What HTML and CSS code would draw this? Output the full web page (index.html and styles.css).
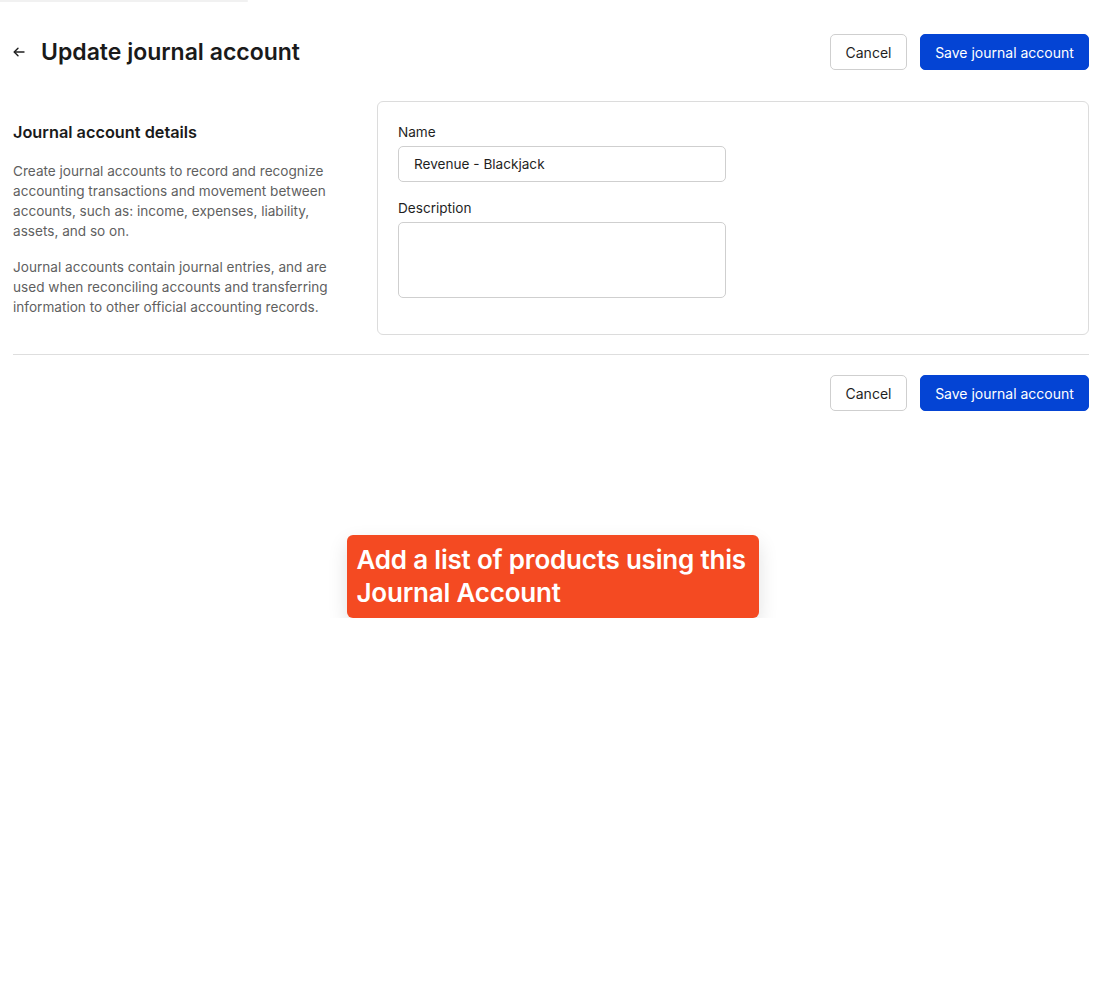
FILE: index.html
```html
<!DOCTYPE html>
<html lang="en">
<head>
    <meta charset="UTF-8">
    <meta name="viewport" content="width=device-width, initial-scale=1.0">
    <title>Update journal account</title>
    <link rel="stylesheet" href="styles.css">
</head>
<body>
    <div class="top-strip"></div>

    <div class="page">
        <header class="page-header">
            <div class="title-group">
                <button class="back-button" aria-label="Back">
                    <svg width="12" height="10" viewBox="0 0 12 10" fill="none" stroke="#1f1f1f" stroke-width="1.4" stroke-linecap="round" stroke-linejoin="round">
                        <path d="M11 5H1.5"/>
                        <path d="M5 1.2L1.2 5L5 8.8"/>
                    </svg>
                </button>
                <h1>Update journal account</h1>
            </div>
            <div class="actions">
                <button class="btn btn-secondary">Cancel</button>
                <button class="btn btn-primary">Save journal account</button>
            </div>
        </header>

        <section class="details">
            <div class="details-intro">
                <h2>Journal account details</h2>
                <p>Create journal accounts to record and recognize accounting transactions and movement between accounts, such as: income, expenses, liability, assets, and so on.</p>
                <p>Journal accounts contain journal entries, and are used when reconciling accounts and transferring information to other official accounting records.</p>
            </div>

            <div class="card">
                <label class="field">
                    <span class="field-label">Name</span>
                    <input type="text" class="input" value="Revenue - Blackjack">
                </label>
                <label class="field">
                    <span class="field-label">Description</span>
                    <textarea class="input textarea"></textarea>
                </label>
            </div>
        </section>

        <footer class="page-footer">
            <button class="btn btn-secondary">Cancel</button>
            <button class="btn btn-primary">Save journal account</button>
        </footer>
    </div>

    <div class="note-wrap">
        <div class="note">Add a list of products using this Journal Account</div>
    </div>
</body>
</html>
```

FILE: styles.css
```css
* {
    box-sizing: border-box;
}

body {
    margin: 0;
    background-color: white;
    color: #1f1f1f;
    font-family: Inter, "Noto Sans", sans-serif;
}

.top-strip {
    width: 248px;
    height: 2px;
    background-color: #f1f1f1;
    border-radius: 0 2px 2px 0;
}

.page {
    padding: 0 16px 0 13px;
}

.page-header {
    display: flex;
    justify-content: space-between;
    align-items: center;
    margin-top: 32px;
    height: 36px;
}

.title-group {
    display: flex;
    align-items: center;
}

.back-button {
    display: flex;
    align-items: center;
    justify-content: center;
    width: 12px;
    height: 16px;
    padding: 0;
    margin-right: 16px;
    border: none;
    background: none;
    cursor: pointer;
}

h1 {
    margin: 0;
    font-size: 23px;
    font-weight: 600;
    color: #1a1a1a;
}

.actions, .page-footer {
    display: flex;
    gap: 13px;
}

.btn {
    height: 36px;
    padding: 0;
    font-family: inherit;
    font-size: 14px;
    white-space: nowrap;
    border-radius: 5px;
    cursor: pointer;
}

.btn-secondary {
    width: 77px;
    background-color: white;
    border: 1px solid #cfcfcf;
    color: #1f1f1f;
}

.btn-primary {
    width: 169px;
    background-color: #0444d4;
    border: 1px solid #0444d4;
    color: white;
}

.details {
    display: flex;
    margin-top: 31px;
    padding-bottom: 19px;
    border-bottom: 1px solid #dedede;
}

.details-intro {
    width: 364px;
    padding-right: 24px;
    padding-top: 21px;
}

h2 {
    margin: 0 0 19px;
    font-size: 16.3px;
    line-height: 20px;
    font-weight: 600;
    color: #1a1a1a;
}

.details-intro p {
    margin: 0 0 16px;
    font-size: 13.6px;
    line-height: 20px;
    color: #5f5f5f;
}

.card {
    flex: 1;
    padding: 21px 20px 36px;
    border: 1px solid #dcdcdc;
    border-radius: 6px;
}

.field {
    display: block;
    width: 328px;
    margin-bottom: 17px;
}

.field:last-child {
    margin-bottom: 0;
}

.field-label {
    display: block;
    margin-bottom: 5px;
    font-size: 13.6px;
    line-height: 18px;
    color: #1f1f1f;
}

.input {
    display: block;
    width: 100%;
    height: 36px;
    padding: 0 15px;
    font-family: inherit;
    font-size: 13.6px;
    color: #1f1f1f;
    border: 1px solid #cfcfcf;
    border-radius: 5px;
    outline: none;
}

.textarea {
    height: 76px;
    resize: none;
}

.page-footer {
    justify-content: flex-end;
    margin-top: 20px;
}

.note-wrap {
    display: flex;
    justify-content: center;
    margin-top: 124px;
}

.note {
    width: 412px;
    padding: 8px 10px 9px;
    background-color: #f44a22;
    color: white;
    font-size: 26px;
    font-weight: 600;
    line-height: 33px;
    letter-spacing: -0.2px;
    border-radius: 6px;
    box-shadow: 0 8px 20px rgba(0, 0, 0, 0.12);
}
```
